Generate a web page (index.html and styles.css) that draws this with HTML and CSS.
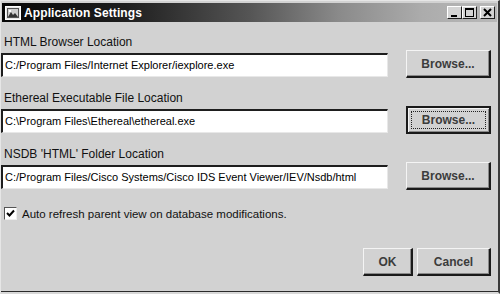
FILE: index.html
```html
<!DOCTYPE html>
<html>
<head>
<meta charset="utf-8">
<link rel="stylesheet" href="styles.css">
</head>
<body>
<div class="window">
  <div class="titlebar">
    <svg class="app-icon" width="16" height="14" viewBox="0 0 16 14">
      <rect x="0.5" y="0.5" width="15" height="13" fill="#e8e8e8" stroke="#fff"/>
      <rect x="2" y="2" width="12" height="10" fill="#555"/>
      <rect x="3" y="3" width="10" height="8" fill="#cfcfcf"/>
      <path d="M3 11 L6 6 L8 9 L10 7 L13 11 Z" fill="#333"/>
      <rect x="4" y="4" width="2" height="2" fill="#fff"/>
    </svg>
    <span class="title">Application Settings</span>
    <div class="caption-buttons">
      <div class="cbtn">
        <svg width="13" height="11" viewBox="0 0 13 11"><rect x="3" y="8" width="6" height="2" fill="#000"/></svg>
      </div>
      <div class="cbtn">
        <svg width="13" height="11" viewBox="0 0 13 11"><rect x="2.5" y="1.5" width="8" height="8" fill="none" stroke="#000"/><rect x="2" y="1" width="9" height="2" fill="#000"/></svg>
      </div>
      <div class="cbtn close">
        <svg width="13" height="11" viewBox="0 0 13 11"><path d="M3 2 L10 9 M10 2 L3 9" stroke="#000" stroke-width="2"/></svg>
      </div>
    </div>
  </div>

  <div class="content">
    <div class="field">
      <div class="label">HTML Browser Location</div>
      <div class="row">
        <div class="input">C:/Program Files/Internet Explorer/iexplore.exe</div>
        <div class="btn browse">Browse...</div>
      </div>
    </div>
    <div class="field">
      <div class="label">Ethereal Executable File Location</div>
      <div class="row">
        <div class="input">C:\Program Files\Ethereal\ethereal.exe</div>
        <div class="btn browse default"><span class="focus">Browse...</span></div>
      </div>
    </div>
    <div class="field">
      <div class="label">NSDB 'HTML' Folder Location</div>
      <div class="row">
        <div class="input">C:/Program Files/Cisco Systems/Cisco IDS Event Viewer/IEV/Nsdb/html</div>
        <div class="btn browse">Browse...</div>
      </div>
    </div>

    <div class="check-row">
      <div class="checkbox">
        <svg width="11" height="11" viewBox="0 0 11 11"><path d="M2 5 L4.5 7.5 L9 2.5" fill="none" stroke="#000" stroke-width="2"/></svg>
      </div>
      <span class="check-label">Auto refresh parent view on database modifications.</span>
    </div>

    <div class="footer">
      <div class="btn ok">OK</div>
      <div class="btn cancel">Cancel</div>
    </div>
  </div>
</div>
</body>
</html>
```

FILE: styles.css
```css
html, body {
  margin: 0;
  padding: 0;
  background: #d2d2d2;
}

.window {
  width: 500px;
  height: 294px;
  box-sizing: border-box;
  background: #d2d2d2;
  border-top: 1px solid #e6e6e6;
  border-left: 1px solid #e6e6e6;
  border-right: 2px solid #3a3a3a;
  border-bottom: 2px solid #d8d8d8;
  box-shadow: inset 0 -1px 0 #2a2a2a;
  padding-top: 2px;
  display: flex;
  flex-direction: column;
  font-family: "Liberation Sans", Arial, sans-serif;
}

.titlebar {
  height: 19px;
  margin: 0 1px 0 1px;
  background: linear-gradient(to right, #080808 0%, #1e1e1e 25%, #555 50%, #8a8a8a 68%, #acacac 85%, #b8b8b8 100%);
  display: flex;
  align-items: center;
  padding-left: 3px;
}

.app-icon {
  flex: none;
}

.title {
  color: #fff;
  font-weight: bold;
  font-size: 12px;
  margin-left: 3px;
  letter-spacing: 0.1px;
}

.caption-buttons {
  margin-left: auto;
  margin-right: 2px;
  display: flex;
  align-items: center;
}

.cbtn {
  width: 15px;
  height: 13px;
  box-sizing: border-box;
  background: #d4d4d4;
  border-top: 1px solid #fff;
  border-left: 1px solid #fff;
  border-right: 1px solid #202020;
  border-bottom: 1px solid #202020;
  display: flex;
  align-items: center;
  justify-content: center;
}

.cbtn.close {
  margin-left: 3px;
}

.content {
  flex: 1;
  display: flex;
  flex-direction: column;
  padding: 0 7px 16px 0;
}

.field {
  margin-top: 13px;
}

.label {
  font-size: 12px;
  line-height: 14px;
  color: #111;
  padding-left: 3px;
  margin-bottom: 1px;
}

.row {
  display: flex;
  align-items: center;
  height: 28px;
}

.input {
  width: 387px;
  height: 24px;
  margin-top: 1px;
  box-sizing: border-box;
  background: #fff;
  border-top: 2px solid #1e1e1e;
  border-left: 2px solid #1e1e1e;
  border-right: 1px solid #e8e8e8;
  border-bottom: 1px solid #e8e8e8;
  font-size: 11px;
  line-height: 21px;
  padding-left: 2px;
  color: #000;
  white-space: nowrap;
  overflow: hidden;
}

.btn {
  height: 28px;
  box-sizing: border-box;
  background: #d2d2d2;
  border-top: 1px solid #f4f4f4;
  border-left: 1px solid #f4f4f4;
  border-right: 2px solid #1a1a1a;
  border-bottom: 2px solid #1a1a1a;
  box-shadow: inset -1px -1px 0 #8a8a8a;
  display: flex;
  align-items: center;
  justify-content: center;
  font-size: 12px;
  font-weight: bold;
  color: #3c3c3c;
}

.browse {
  width: 85px;
  margin-left: auto;
}

.browse.default {
  border: 2px solid #1a1a1a;
  box-shadow: inset 1px 1px 0 #f4f4f4, inset -1px -1px 0 #8a8a8a;
  padding: 3px;
}

.focus {
  flex: 1;
  align-self: stretch;
  border: 1px dotted #222;
  display: flex;
  align-items: center;
  justify-content: center;
}

.check-row {
  display: flex;
  align-items: center;
  margin-top: 17px;
  padding-left: 3px;
}

.checkbox {
  width: 13px;
  height: 13px;
  box-sizing: border-box;
  background: #fff;
  border-top: 1px solid #555;
  border-left: 1px solid #555;
  border-right: 1px solid #eee;
  border-bottom: 1px solid #eee;
  display: flex;
  align-items: center;
  justify-content: center;
}

.check-label {
  font-size: 11.5px;
  margin-left: 5px;
  color: #111;
}

.footer {
  margin-top: auto;
  display: flex;
  justify-content: flex-end;
  gap: 4px;
}

.ok {
  width: 50px;
}

.cancel {
  width: 74px;
}
```
